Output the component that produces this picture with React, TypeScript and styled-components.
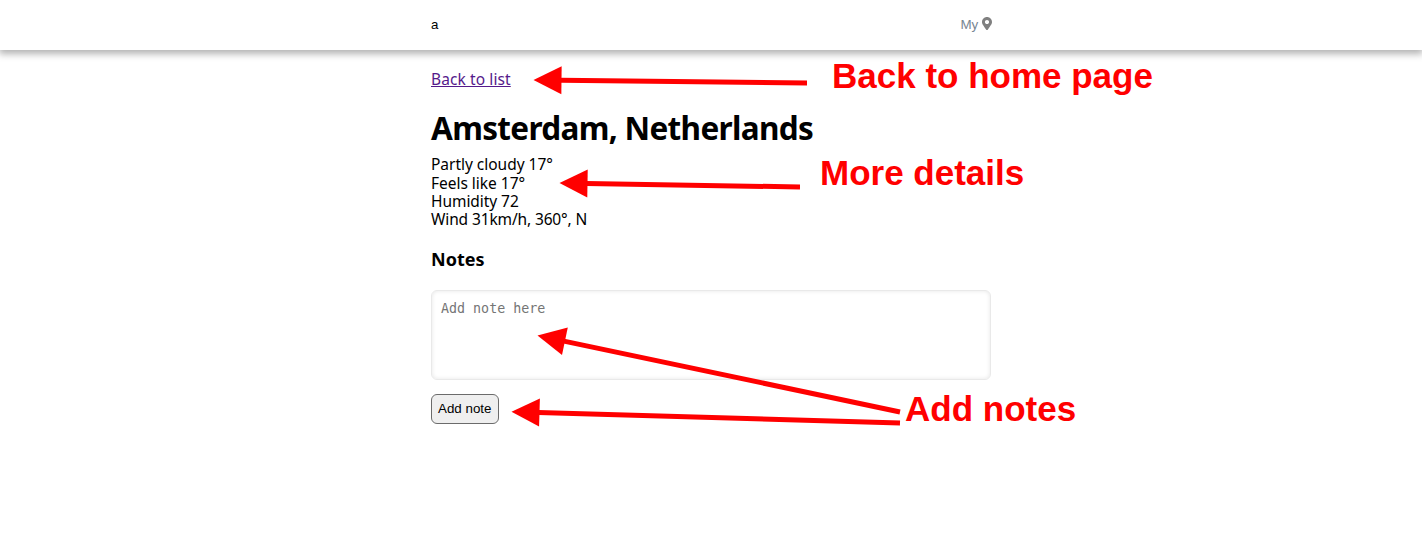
import React from "react";
import styled, { createGlobalStyle } from "styled-components";
import { FaMapMarkerAlt } from "react-icons/fa";

const GlobalStyle = createGlobalStyle`
  * { box-sizing: border-box; }
  html, body { margin: 0; background: #fff; }
  body { font: 15.5px/18.35px "Noto Sans", sans-serif; color: #000; overflow: hidden; }
`;

const Page = styled.div`
  position: relative;
  height: 558px;
  overflow: hidden;
`;

const Header = styled.header`
  height: 50px;
  background: #fff;
  box-shadow: 0 3px 7px 1px rgba(0, 0, 0, 0.3);
  font: 13.333px/16px "Liberation Sans", sans-serif;
`;

const Bar = styled.div`
  width: 561px;
  height: 49px;
  margin: 0 auto 0 431px;
  display: flex;
  align-items: center;
  justify-content: space-between;
`;

const MyPlaces = styled.div`
  display: flex;
  align-items: center;
  color: #778592;
  svg {
    width: 10px;
    height: 13.33px;
    margin: -2px 0 0 3.8px;
    color: #808080;
  }
`;

const Content = styled.main`
  width: 560px;
  margin-left: 431px;
  padding-top: 20px;
  display: flex;
  flex-direction: column;
  align-items: flex-start;
`;

const Back = styled.a`
  color: #551a8b;
  text-decoration: underline;
  letter-spacing: 0.1px;
`;

const Title = styled.h1`
  margin: 21px 0 9px;
  font-size: 31.5px;
  line-height: 37px;
  letter-spacing: -0.67px;
  white-space: nowrap;
`;

const Line = styled.div<{ $spacing: number }>`
  letter-spacing: ${(p) => p.$spacing}px;
  white-space: nowrap;
`;

const Subtitle = styled.h3`
  margin: 19px 0 20px;
  font-size: 18px;
  line-height: 22px;
  letter-spacing: 0;
`;

const Note = styled.textarea`
  display: block;
  width: 560px;
  height: 90px;
  padding: 10px 9px 8px;
  border: 1px solid #e9e9e9;
  border-radius: 6px;
  box-shadow: inset 0 0 4px rgba(0, 0, 0, 0.1);
  resize: none;
  outline: none;
  font: 13.333px/16px "DejaVu Sans Mono", monospace;
  &::placeholder { color: #757575; }
`;

const AddButton = styled.button`
  width: 67.5px;
  height: 30px;
  margin-top: 14px;
  padding: 0;
  border: 1px solid #6b6b6b;
  border-radius: 6px;
  background: #efefef;
  color: #000;
  font: 13.333px "Liberation Sans", sans-serif;
`;

const Arrows = styled.svg`
  position: absolute;
  inset: 0;
  pointer-events: none;
`;

const Callout = styled.div<{ $x: number; $y: number }>`
  position: absolute;
  left: ${(p) => p.$x}px;
  top: ${(p) => p.$y}px;
  color: #f00;
  font: bold 35px/40px "Liberation Sans", sans-serif;
  white-space: nowrap;
`;

const arrows = [
  { tip: [533.5, 80], tail: [807, 83] },
  { tip: [559.5, 183], tail: [800, 187] },
  { tip: [537.5, 335.5], tail: [900, 412] },
  { tip: [511.5, 411.8], tail: [900, 423] },
];

function Arrow({ tip, tail }: { tip: number[]; tail: number[] }) {
  const dx = tail[0] - tip[0];
  const dy = tail[1] - tip[1];
  const length = Math.hypot(dx, dy);
  const angle = (Math.atan2(dy, dx) * 180) / Math.PI;
  return (
    <g transform={`translate(${tip[0]} ${tip[1]}) rotate(${angle})`}>
      <path d="M0 0L28 -14V14Z" fill="#f00" />
      <path d={`M27 0H${length}`} stroke="#f00" strokeWidth="5" />
    </g>
  );
}

export default function App() {
  return (
    <Page>
      <GlobalStyle />
      <Header>
        <Bar>
          <span>a</span>
          <MyPlaces>My <FaMapMarkerAlt /></MyPlaces>
        </Bar>
      </Header>
      <Content>
        <Back href="#">Back to list</Back>
        <Title>Amsterdam, Netherlands</Title>
        <Line $spacing={-0.02}>Partly cloudy 17°</Line>
        <Line $spacing={-0.02}>Feels like 17°</Line>
        <Line $spacing={-0.06}>Humidity 72</Line>
        <Line $spacing={-0.13}>Wind 31km/h, 360°, N</Line>
        <Subtitle>Notes</Subtitle>
        <Note placeholder="Add note here" />
        <AddButton>Add note</AddButton>
      </Content>
      <Arrows width="1422" height="558" viewBox="0 0 1422 558">
        {arrows.map((arrow) => (
          <Arrow key={arrow.tip.join()} {...arrow} />
        ))}
      </Arrows>
      <Callout $x={832} $y={56}>Back to home page</Callout>
      <Callout $x={820} $y={153}>More details</Callout>
      <Callout $x={905} $y={389}>Add notes</Callout>
    </Page>
  );
}
